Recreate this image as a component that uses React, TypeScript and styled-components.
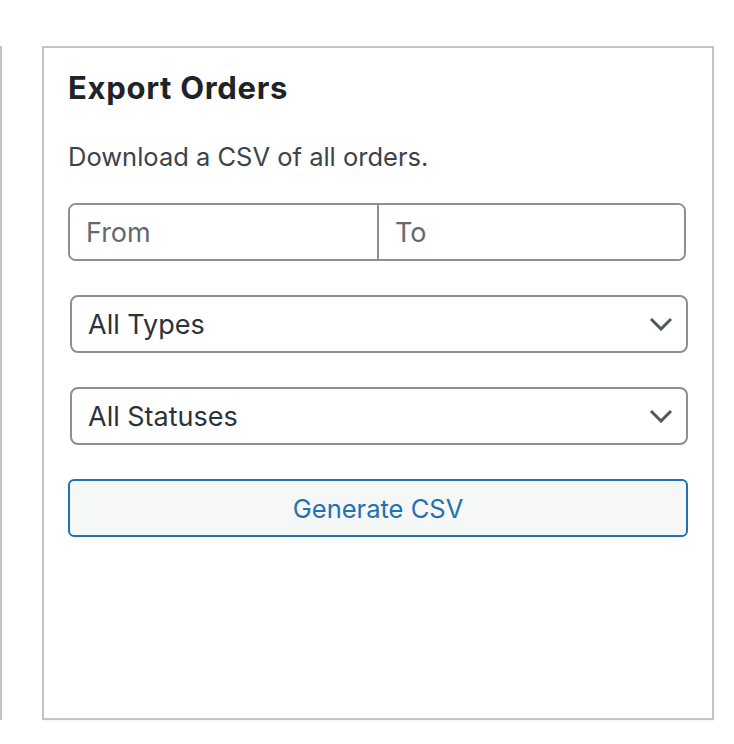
import React from "react";
import styled, { createGlobalStyle } from "styled-components";

const GlobalStyle = createGlobalStyle`
  html, body {
    margin: 0;
    padding: 0;
    background: #ffffff;
  }
  body {
    font-family: Inter, "Noto Sans", "Liberation Sans", sans-serif;
    color: #3c434a;
  }
`;

const Page = styled.div`
  display: flex;
  align-items: flex-start;
  gap: 40px;
  padding-top: 46px;
  width: 734px;
  height: 744px;
  box-sizing: border-box;
`;

const PrevColumn = styled.div`
  width: 2px;
  height: 674px;
  background: #c3c4c7;
`;

const Postbox = styled.section`
  width: 672px;
  height: 674px;
  box-sizing: border-box;
  border: 2px solid #c3c4c7;
  box-shadow: 0 2px 2px rgba(0, 0, 0, 0.04);
  background: #fff;
  padding: 18px 24px;
`;

const Title = styled.h2`
  margin: 0;
  font-size: 31px;
  line-height: 44px;
  letter-spacing: 0.7px;
  font-weight: 700;
  color: #1d2327;
`;

const Description = styled.p`
  margin: 29px 0 0;
  font-size: 25.5px;
  line-height: 36px;
  color: #3c434a;
`;

const DateRange = styled.div`
  display: grid;
  grid-template-columns: 1fr 1fr;
  margin-top: 28px;
  width: 618px;
  height: 58px;
  box-sizing: border-box;
  border: 2px solid #8c8f94;
  border-radius: 8px;
  overflow: hidden;
`;

const DateInput = styled.input<{ $divider?: boolean }>`
  border: 0;
  border-left: ${(p) => (p.$divider ? "2px solid #8c8f94" : "0")};
  margin: 0;
  padding: 0 16px;
  font-family: inherit;
  font-size: 27px;
  color: #2c3338;
  background: #fff;
  outline: none;
  min-width: 0;

  &::placeholder {
    color: #646970;
  }
`;

const SelectWrap = styled.div`
  position: relative;
  margin: 34px 0 0 2px;
  width: 618px;
  height: 58px;
`;

const Select = styled.select`
  appearance: none;
  width: 100%;
  height: 100%;
  box-sizing: border-box;
  border: 2px solid #8c8f94;
  border-radius: 8px;
  background: #fff;
  padding: 0 60px 0 16px;
  font-family: inherit;
  font-size: 27px;
  color: #2c3338;
  outline: none;
`;

const Chevron = styled.svg`
  position: absolute;
  right: 15px;
  top: 50%;
  transform: translateY(-50%);
  pointer-events: none;
`;

const GenerateButton = styled.button`
  display: block;
  margin-top: 34px;
  width: 620px;
  height: 58px;
  box-sizing: border-box;
  border: 2px solid #2271b1;
  border-radius: 6px;
  background: #f6f7f7;
  color: #2271b1;
  font-family: inherit;
  font-size: 25.5px;
  cursor: pointer;
`;

function Dropdown({ options }: { options: string[] }) {
  return (
    <SelectWrap>
      <Select defaultValue={options[0]}>
        {options.map((o) => (
          <option key={o}>{o}</option>
        ))}
      </Select>
      <Chevron width="24" height="14" viewBox="0 0 24 14" aria-hidden="true">
        <path
          d="M2 2l10 10L22 2"
          fill="none"
          stroke="#50575e"
          strokeWidth="3"
        />
      </Chevron>
    </SelectWrap>
  );
}

export default function App() {
  return (
    <>
      <GlobalStyle />
      <Page>
        <PrevColumn />
        <Postbox>
          <Title>Export Orders</Title>
          <Description>Download a CSV of all orders.</Description>
          <DateRange>
            <DateInput type="text" placeholder="From" />
            <DateInput type="text" placeholder="To" $divider />
          </DateRange>
          <Dropdown options={["All Types", "Subscriptions", "One-time"]} />
          <Dropdown options={["All Statuses", "Completed", "Processing", "Refunded"]} />
          <GenerateButton type="button">Generate CSV</GenerateButton>
        </Postbox>
      </Page>
    </>
  );
}
